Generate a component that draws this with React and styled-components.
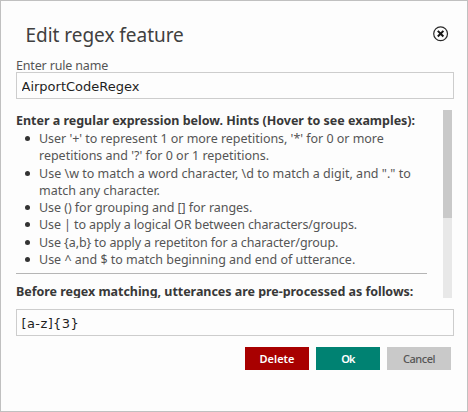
import React from "react";
import styled, { createGlobalStyle } from "styled-components";

const GlobalStyle = createGlobalStyle`
  * { box-sizing: border-box; }
  body { margin: 0; }
`;

const Dialog = styled.section`
  width: 468px;
  height: 412px;
  padding: 0 13px 0 15px;
  border: 1px solid #c0c0c0;
  background: #fdfdfd;
  color: #555;
  font: 400 12.5px/17.25px "Noto Sans", sans-serif;
  display: flex;
  flex-direction: column;
`;

const Header = styled.header`
  height: 56px;
  padding: 11px 5px 0 9.5px;
  display: flex;
  align-items: center;
  justify-content: space-between;
`;

const Title = styled.h1`
  margin: 0;
  color: #404040;
  font-size: 19px;
  font-weight: 400;
  line-height: 26px;
  letter-spacing: -0.03px;
`;

const CloseButton = styled.button`
  width: 16px;
  height: 16px;
  margin-top: -2px;
  padding: 0;
  border: 0;
  background: none;
  svg { display: block; }
`;

const Label = styled.label`
  height: 15px;
  line-height: 17px;
  letter-spacing: -0.16px;
`;

const Field = styled.input`
  width: 438px;
  height: 27px;
  flex: none;
  padding: 2px 5px 0 4.5px;
  border: 1px solid #cdcdcd;
  background: #fdfdfd;
  color: #1f1f1f;
  font: 400 13px "DejaVu Sans", sans-serif;
  letter-spacing: ${(p) => p.$tracking || 0}px;
  outline: 0;
`;

const HelpPanel = styled.div`
  height: 188px;
  margin: 11px 2px 11px 0;
  flex: none;
  display: flex;
  justify-content: space-between;
  overflow: hidden;
`;

const HelpText = styled.div`
  width: 411px;
`;

const Heading = styled.h2`
  margin: 0;
  padding-top: ${(p) => p.$top}px;
  color: #383838;
  font-size: 12.5px;
  font-weight: 700;
  line-height: 18px;
  letter-spacing: ${(p) => p.$tracking || 0}px;
  white-space: nowrap;
`;

const Hints = styled.ul`
  margin: 0;
  padding: 0 0 0 23px;
  list-style: none;
`;

const Hint = styled.li`
  display: flex;
  &::before {
    content: "";
    flex: none;
    width: 5px;
    height: 5px;
    margin: 6px 0 0 -14px;
    border-radius: 50%;
    background: #333;
  }
`;

const HintBody = styled.div`
  padding-left: 9px;
`;

const Line = styled.div`
  white-space: nowrap;
  letter-spacing: ${(p) => p.$tracking || 0}px;
`;

const Divider = styled.hr`
  width: 411px;
  height: 1px;
  margin: 5px 0 0;
  border: 0;
  background: #b5b5b5;
`;

const ScrollTrack = styled.div`
  width: 9px;
  background: #e8e8e8;
`;

const ScrollThumb = styled.div`
  height: 108px;
  background: #c9c9c9;
`;

const Actions = styled.footer`
  margin: 11px 3px 0 0;
  display: flex;
  justify-content: flex-end;
  gap: 7px;
`;

const Action = styled.button`
  width: 64px;
  height: 23px;
  padding: 0;
  border: 0;
  background: ${(p) => p.$fill};
  color: ${(p) => p.$ink || "#fff"};
  font: ${(p) => p.$weight || 600} 11px/23px "Noto Sans", sans-serif;
  letter-spacing: ${(p) => p.$tracking || 0}px;
`;

const HINTS = [
  [
    ["User '+' to represent 1 or more repetitions, '*' for 0 or more", -0.03],
    ["repetitions and '?' for 0 or 1 repetitions.", -0.01],
  ],
  [
    ['Use \\w to match a word character, \\d to match a digit, and "." to', 0.012],
    ["match any character.", -0.02],
  ],
  [["Use () for grouping and [] for ranges.", -0.045]],
  [["Use | to apply a logical OR between characters/groups.", -0.1]],
  [["Use {a,b} to apply a repetiton for a character/group.", -0.09]],
  [["Use ^ and $ to match beginning and end of utterance.", -0.01]],
];

function CloseIcon() {
  return (
    <svg width="16" height="16" viewBox="0 0 16 16" fill="none">
      <circle cx="7.6" cy="7.7" r="6.9" stroke="#2a2a2a" strokeWidth="1.2" />
      <path d="M4.8 4.9 10.4 10.5M10.4 4.9 4.8 10.5" stroke="#161616" strokeWidth="2" />
    </svg>
  );
}

export default function App() {
  return (
    <>
      <GlobalStyle />
      <Dialog>
        <Header>
          <Title>Edit regex feature</Title>
          <CloseButton aria-label="Close">
            <CloseIcon />
          </CloseButton>
        </Header>
        <Label htmlFor="rule-name">Enter rule name</Label>
        <Field id="rule-name" defaultValue="AirportCodeRegex" />
        <HelpPanel>
          <HelpText>
            <Heading $top={2} $tracking={-0.015}>
              Enter a regular expression below. Hints (Hover to see examples):
            </Heading>
            <Hints>
              {HINTS.map((lines) => (
                <Hint key={lines[0][0]}>
                  <HintBody>
                    {lines.map(([text, tracking]) => (
                      <Line key={text} $tracking={tracking}>{text}</Line>
                    ))}
                  </HintBody>
                </Hint>
              ))}
            </Hints>
            <Divider />
            <Heading $top={9} $tracking={-0.035}>
              Before regex matching, utterances are pre-processed as follows:
            </Heading>
          </HelpText>
          <ScrollTrack>
            <ScrollThumb />
          </ScrollTrack>
        </HelpPanel>
        <Field aria-label="Regular expression" defaultValue="[a-z]{3}" $tracking={0.4} />
        <Actions>
          <Action $fill="#a80000">Delete</Action>
          <Action $fill="#008272" $tracking={-0.8}>Ok</Action>
          <Action $fill="#c9c9c9" $ink="#555" $weight={500} $tracking={-0.5}>Cancel</Action>
        </Actions>
      </Dialog>
    </>
  );
}
